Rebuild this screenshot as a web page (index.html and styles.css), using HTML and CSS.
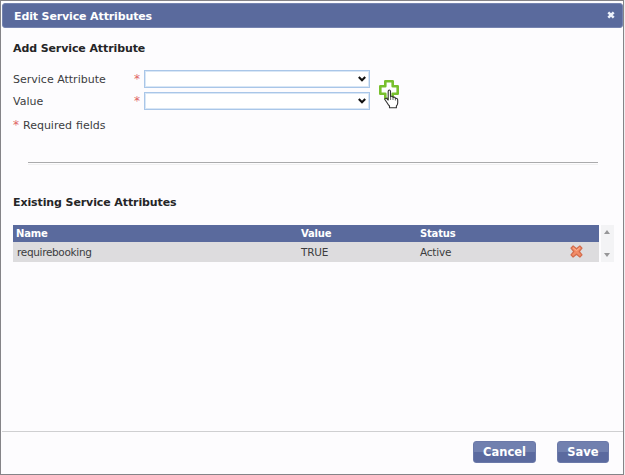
FILE: index.html
```html
<!DOCTYPE html>
<html lang="en">
<head>
<meta charset="utf-8">
<title>Edit Service Attributes</title>
<link rel="stylesheet" href="styles.css">
</head>
<body>
<div class="dialog">
  <header class="titlebar">
    <h1 class="title"><span>Edit Service Attributes</span></h1>
    <button class="close" aria-label="Close"><svg width="8" height="8" viewBox="0 0 8 8"><path d="M1.3 1.3L6.7 6.7M6.7 1.3L1.3 6.7" stroke="#edf1fb" stroke-width="2.5"/></svg></button>
  </header>
  <main class="content">
    <h2 class="heading heading-add">Add Service Attribute</h2>
    <div class="form">
      <div class="fields">
        <div class="field"><label class="label" for="attribute">Service Attribute</label><span class="star">*</span>
          <div class="dropdown"><select id="attribute"></select><svg class="chevron" width="8" height="6" viewBox="0 0 8 6"><path d="M.8 1L4 4.2L7.2 1" fill="none" stroke="#111" stroke-width="2.1"/></svg></div>
        </div>
        <div class="field"><label class="label" for="value">Value</label><span class="star">*</span>
          <div class="dropdown"><select id="value"></select><svg class="chevron" width="8" height="6" viewBox="0 0 8 6"><path d="M.8 1L4 4.2L7.2 1" fill="none" stroke="#111" stroke-width="2.1"/></svg></div>
        </div>
      </div>
      <button class="add" aria-label="Add">
        <svg width="20" height="20" viewBox="0 0 20 20"><path d="M6.3 1.3H13.7V6.3H18.7V13.7H13.7V18.7H6.3V13.7H1.3V6.3H6.3Z" fill="#fff" stroke="#78c02d" stroke-width="2.6" stroke-linejoin="round"/></svg>
        <svg class="pointer" width="15" height="20" viewBox="0 0 15 20"><path d="M4.2 11V2.3Q4.2 1 5.3 1T6.5 2.3V7.6Q8.8 6.7 9 8.4Q11.2 7.6 11.4 9.4Q13.7 9 13.7 11.3V14Q13.7 15.7 12.4 17V18.8H5.5V17Q4.2 15.8 2.9 13.5L1 10.7Q.7 9.5 1.7 9.3Q2.5 9.1 3.2 10Z" fill="#fff" stroke="#333" stroke-width="1.1" stroke-linejoin="round"/><path d="M6.6 7.5V11M9 8.4V11M11.4 9.4V11.5" stroke="#444" stroke-width=".8"/></svg>
      </button>
    </div>
    <p class="required"><span class="red">*</span> Required fields</p>
    <hr class="rule">
    <h2 class="heading heading-existing">Existing Service Attributes</h2>
    <div class="grid">
      <table class="table">
        <colgroup><col class="c1"><col class="c2"><col class="c3"><col class="c4"></colgroup>
        <thead><tr><th>Name</th><th>Value</th><th>Status</th><th></th></tr></thead>
        <tbody><tr><td class="name">requirebooking</td><td>TRUE</td><td>Active</td><td class="action"><svg width="13" height="13" viewBox="0 0 13 13"><path d="M3.1 1L6.5 3.8L9.9 1L12 3.1L9.2 6.5L12 9.9L9.9 12L6.5 9.2L3.1 12L1 9.9L3.8 6.5L1 3.1Z" fill="#f28c67" stroke="#d36c4c" stroke-width="1.2" stroke-linejoin="round"/><path d="M3.1 2.8L6.5 5.6L9.8 2.8" fill="none" stroke="#ffb795" stroke-width="1"/></svg></td></tr></tbody>
      </table>
      <div class="scrollbar"><svg width="6" height="4" viewBox="0 0 6 4"><path d="M0 4L3 0L6 4Z" fill="#969698"/></svg><svg width="6" height="4" viewBox="0 0 6 4"><path d="M0 0L3 4L6 0Z" fill="#969698"/></svg></div>
    </div>
  </main>
  <footer class="footer">
    <button class="button cancel">Cancel</button>
    <button class="button save">Save</button>
  </footer>
</div>
</body>
</html>
```
FILE: styles.css
```css
* { box-sizing: border-box; }
body {
  margin: 0;
  font-family: "DejaVu Sans", Verdana, sans-serif;
  font-size: 11px;
  color: #3c3c3e;
  background: #efeef0;
}
button { font-family: inherit; border: 0; padding: 0; background: none; }
.dialog {
  width: 624px;
  height: 475px;
  display: flex;
  flex-direction: column;
  padding-top: 2px;
  background: #fdfcfe;
  border: 1px solid #858488;
}
.titlebar {
  height: 25px;
  margin-left: 1px;
  padding: 0 7px 0 11px;
  display: flex;
  align-items: center;
  justify-content: space-between;
  background: #5a6a9d;
  border: 1px solid #7684b0;
  border-radius: 3px;
}
.title { margin: 1px 0 0; font-size: 11px; line-height: 23px; letter-spacing: -.13px; color: #fff; }
.close { display: flex; margin-top: -1px; }
.content { flex: 1; padding: 13px 9px 0 12px; }
.heading { margin: 0; height: 16px; line-height: 16px; font-size: 11px; letter-spacing: -.1px; color: #252527; }
.form { display: flex; margin-top: 13px; }
.fields { display: grid; gap: 4px; }
.field { display: flex; align-items: center; height: 18px; }
.label { width: 121px; }
.star { width: 10px; font-size: 12px; color: #e06464; }
.dropdown { display: flex; align-items: center; position: relative; }
.dropdown select {
  appearance: none;
  width: 226px;
  height: 18px;
  background: #fff;
  border: 1px solid #a9c6e8;
  box-shadow: inset 0 0 0 1px #d9e7f6;
  border-radius: 0;
}
.chevron { position: absolute; right: 4px; }
.add { position: relative; width: 20px; height: 20px; margin: 10px 0 0 9px; }
.add svg { display: block; }
.add .pointer { position: absolute; left: 5px; top: 9px; }
.required { margin: 8px 0 0; height: 16px; line-height: 16px; word-spacing: .5px; }
.red { font-size: 12px; line-height: 1; color: #e06464; }
.rule { height: 3px; margin: 28px 16px 0 15px; border: 0; border-top: 1px solid #aaaaac; border-bottom: 1px solid #f0f0f1; }
.heading-existing { margin-top: 30px; }
.grid { display: flex; gap: 2px; margin-top: 14px; height: 37px; }
.table { width: 586px; table-layout: fixed; border-collapse: collapse; }
.c1 { width: 284px; }
.c2 { width: 119px; }
.c3 { width: 149px; }
th, td { padding: 0 0 0 4px; text-align: left; font-size: 10.5px; letter-spacing: -.2px; }
th { height: 17px; padding-left: 3px; font-size: 10px; background: #5a6a9d; color: #fff; }
th:nth-child(n+2) { padding-left: 4px; }
td { height: 20px; background: #dddcde; }
.name { letter-spacing: -.33px; }
.action { padding-left: 5px; }
.action svg { display: block; margin-bottom: 1px; }
.scrollbar { width: 13px; padding: 5px 1px 5px 0; display: flex; flex-direction: column; align-items: center; justify-content: space-between; background: #f3f3f5; }
.footer { height: 43px; margin-left: 1px; padding: 9px 14px 0 0; display: flex; justify-content: flex-end; gap: 21px; border-top: 1px solid #cfcfd1; }
.button {
  height: 22px;
  border: 1px solid #6b79a9;
  border-radius: 3px;
  background: linear-gradient(#7180af 0 48%, #5b6a9f 49% 100%);
  color: #fff;
  font-size: 11.5px;
  font-weight: bold;
  line-height: 21px;
}
.cancel { width: 63px; }
.save { width: 52px; }
```
